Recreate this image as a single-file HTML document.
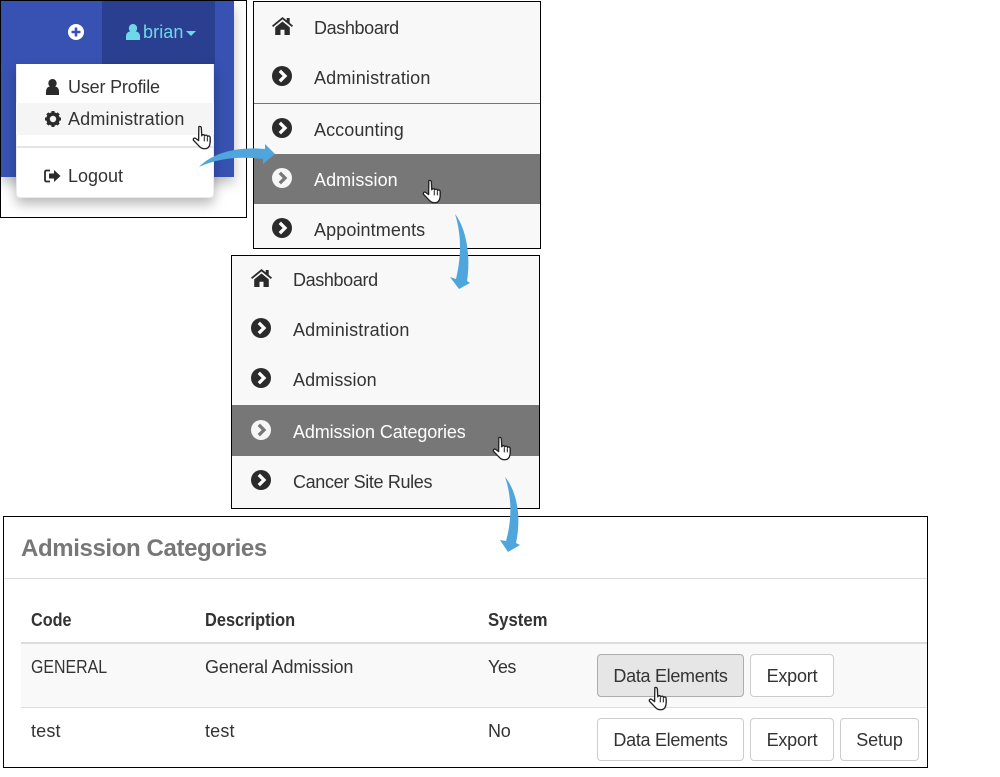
<!DOCTYPE html>
<html><head><meta charset="utf-8"><style>
html,body{margin:0;padding:0;background:#fff}
#p{position:relative;width:1000px;height:777px;overflow:hidden;background:#fff;font-family:"Liberation Sans",sans-serif;font-size:18px;color:#333}
#p div,#p span,#p svg{position:absolute;box-sizing:border-box}
.t{white-space:nowrap;line-height:24px;height:24px;letter-spacing:.18px}
.box{border:1px solid #000;background:#f8f8f8}
.btn{border:1px solid #ccc;border-radius:4px;background:#fff;text-align:center;line-height:42px;height:43px;white-space:nowrap}
.b{font-weight:bold;letter-spacing:0;transform-origin:left center}
.de{letter-spacing:-.3px}.ex{letter-spacing:-.2px}
.da{letter-spacing:-.37px}.ac{letter-spacing:.08px}.ad{letter-spacing:.08px}.ap{letter-spacing:.1px}
.h{width:21px;height:25.500px}
</style></head><body><div id="p">
<svg width="0" height="0"><defs>
<g id="hand"><path d="M6.500 1.500c1.200-.8 2.300 0 2.400 1.200l.4 7.500c.3-1.500 2.600-1.500 2.800.2.500-1.300 2.500-1.200 2.700.5.600-1 2.400-.7 2.500.9.200 3 .3 5.500-.8 8-.8 1.800-2 2.700-4.500 2.700-2.700 0-4-.8-5.300-2.600L1.500 14.500c-.8-1.200.4-2.700 1.800-2l3 2.200z" fill="#fff" stroke="#222" stroke-width="1.250" stroke-linejoin="round"/><path d="M11.700 11v4.500M14.600 11.500v4M17.200 12.500v3.500" stroke="#222" stroke-width="1" fill="none"/></g>
<g id="chev"><circle cx="10" cy="10" r="10" fill="#2b2b2b"/><path d="M7.800 4.800L13 10l-5.200 5.200" fill="none" stroke="#fff" stroke-width="3.300"/></g>
<g id="chevw"><circle cx="10" cy="10" r="10" fill="#f6f6f6"/><path d="M7.800 4.800L13 10l-5.200 5.200" fill="none" stroke="#777" stroke-width="3.300"/></g>
<g id="home"><path d="M10.500 0L0 8.600l1.100 1.400L10.500 2.400 19.900 10 21 8.600l-3.300-2.700V1h-3v2.400zM3.200 10.400v7.600h5.300v-5.300h4v5.300h5.300v-7.600L10.500 4.500z" fill="#2b2b2b"/></g>
</defs></svg>

<!-- panel 1 -->
<div style="left:0;top:0;width:247px;height:218px;border:1px solid #000;background:#fff"></div>
<div style="left:1px;top:1px;width:233px;height:176px;background:#3752b3;box-shadow:0 6px 12px rgba(0,0,0,.25)"></div>
<div style="left:102px;top:1px;width:113px;height:63px;background:#2a3f8f"></div>
<svg style="left:68px;top:24px" width="16" height="16"><circle cx="8" cy="8" r="8" fill="#fff"/><path d="M8 3.500v9M3.500 8h9" stroke="#3752b3" stroke-width="2.600"/></svg>
<svg style="left:126px;top:24px" width="14" height="16"><circle cx="7" cy="4.200" r="4.200" fill="#6fd8e8"/><path d="M0 16v-3.500C0 9.500 2 7.500 4 7.500h6c2 0 4 2 4 5V16z" fill="#6fd8e8"/></svg>
<span class="t" style="left:143px;top:20px;color:#6fd8e8;letter-spacing:.1px">brian</span>
<svg style="left:186px;top:31px" width="10" height="5"><path d="M0 0h10L5 5z" fill="#6fd8e8"/></svg>
<div style="left:16px;top:64px;width:198px;height:134px;background:#fff;border-radius:0 0 4px 4px;box-shadow:0 6px 12px rgba(0,0,0,.28);border:1px solid rgba(0,0,0,.08);border-top:0"></div>
<div style="left:16px;top:103px;width:198px;height:32px;background:#f5f5f5"></div>
<div style="left:16px;top:146px;width:198px;height:2px;background:#e5e5e5"></div>
<svg style="left:46px;top:79px" width="13" height="16"><circle cx="6.500" cy="4.200" r="4.200" fill="#2b2b2b"/><path d="M0 16v-3.500C0 9.500 2 7.500 4 7.500h5c2 0 4 2 4 5V16z" fill="#2b2b2b"/></svg>
<span class="t" style="left:68px;top:75px;letter-spacing:-.18px">User Profile</span>
<svg style="left:45px;top:111px" width="16" height="16" viewBox="0 0 16 16"><circle cx="8" cy="8" r="5" fill="none" stroke="#2b2b2b" stroke-width="3.600"/><path d="M8 0v16M0 8h16M2.300 2.300l11.400 11.400M13.700 2.300L2.300 13.700" stroke="#2b2b2b" stroke-width="3" stroke-dasharray="3 10 3"/></svg>
<span class="t" style="left:68px;top:107px">Administration</span>
<svg style="left:44px;top:169px" width="17" height="14"><path d="M6 1.500H2.500Q1 1.500 1 3v8q0 1.500 1.500 1.500H6" fill="none" stroke="#2b2b2b" stroke-width="1.800"/><path d="M5 4.500h5V1l6.500 6-6.500 6V9.500H5z" fill="#2b2b2b"/></svg>
<span class="t" style="left:68px;top:164px;letter-spacing:0">Logout</span>
<svg class="h" style="left:192px;top:125px" viewBox="0 0 20 24"><use href="#hand"/></svg>

<!-- panel 2 -->
<div class="box" style="left:253px;top:1px;width:288px;height:248px"></div>
<div style="left:254px;top:103px;width:286px;height:1px;background:#777"></div>
<div style="left:254px;top:154px;width:286px;height:50px;background:#777"></div>
<svg style="left:272px;top:17px" width="21" height="18"><use href="#home"/></svg>
<span class="t da" style="left:314px;top:16px">Dashboard</span>
<svg style="left:272px;top:66px" width="20" height="20"><use href="#chev"/></svg>
<span class="t" style="left:314px;top:66px">Administration</span>
<svg style="left:272px;top:118px" width="20" height="20"><use href="#chev"/></svg>
<span class="t ac" style="left:314px;top:118px">Accounting</span>
<svg style="left:272px;top:168px" width="20" height="20"><use href="#chevw"/></svg>
<span class="t ad" style="left:314px;top:168px;color:#fff">Admission</span>
<svg style="left:272px;top:218px" width="20" height="20"><use href="#chev"/></svg>
<span class="t ap" style="left:314px;top:218px">Appointments</span>
<svg class="h" style="left:422px;top:179px" viewBox="0 0 20 24"><use href="#hand"/></svg>

<!-- panel 3 -->
<div class="box" style="left:231px;top:255px;width:309px;height:254px"></div>
<div style="left:232px;top:405px;width:307px;height:51px;background:#777"></div>
<svg style="left:251px;top:269px" width="21" height="18"><use href="#home"/></svg>
<span class="t da" style="left:293px;top:268px">Dashboard</span>
<svg style="left:251px;top:318px" width="20" height="20"><use href="#chev"/></svg>
<span class="t" style="left:293px;top:318px">Administration</span>
<svg style="left:251px;top:368px" width="20" height="20"><use href="#chev"/></svg>
<span class="t ad" style="left:293px;top:368px">Admission</span>
<svg style="left:251px;top:420px" width="20" height="20"><use href="#chevw"/></svg>
<span class="t" style="left:293px;top:420px;color:#fff;letter-spacing:-.12px">Admission Categories</span>
<svg style="left:251px;top:470px" width="20" height="20"><use href="#chev"/></svg>
<span class="t" style="left:293px;top:470px;letter-spacing:-.35px">Cancer Site Rules</span>
<svg class="h" style="left:492px;top:436px" viewBox="0 0 20 24"><use href="#hand"/></svg>

<!-- panel 4 -->
<div style="left:3px;top:516px;width:925px;height:252px;border:1px solid #000;background:#fff"></div>
<div style="left:4px;top:578px;width:923px;height:1px;background:#ddd"></div>
<span class="t b" style="left:21px;top:535px;font-size:24px;color:#777;line-height:27px;height:27px;letter-spacing:-.38px">Admission Categories</span>
<span class="t b" style="left:31px;top:608px;transform:scaleX(.9)">Code</span>
<span class="t b" style="left:205px;top:608px;transform:scaleX(.91)">Description</span>
<span class="t b" style="left:488px;top:608px;transform:scaleX(.93)">System</span>
<div style="left:21px;top:644px;width:906px;height:63px;background:#f9f9f9"></div>
<div style="left:21px;top:642px;width:906px;height:2px;background:#ddd"></div>
<div style="left:21px;top:707px;width:906px;height:1px;background:#ddd"></div>
<span class="t" style="left:31px;top:655px;letter-spacing:0;transform:scaleX(.885);transform-origin:left center">GENERAL</span>
<span class="t" style="left:205px;top:655px;letter-spacing:-.17px">General Admission</span>
<span class="t" style="left:488px;top:655px;letter-spacing:-.5px">Yes</span>
<span class="t" style="left:31px;top:719px">test</span>
<span class="t" style="left:205px;top:719px">test</span>
<span class="t" style="left:488px;top:719px;letter-spacing:-.2px">No</span>
<div class="btn de" style="left:597px;top:654px;width:147px;background:#e6e6e6;border-color:#adadad">Data Elements</div>
<div class="btn ex" style="left:750px;top:654px;width:84px">Export</div>
<div class="btn de" style="left:597px;top:718px;width:147px">Data Elements</div>
<div class="btn ex" style="left:750px;top:718px;width:84px">Export</div>
<div class="btn" style="left:840px;top:718px;width:79px;letter-spacing:-.1px">Setup</div>
<svg class="h" style="left:648px;top:686px" viewBox="0 0 20 24"><use href="#hand"/></svg>

<!-- arrows -->
<svg style="left:0;top:0" width="1000" height="777" viewBox="0 0 1000 777">
<path d="M199 167C212 153 238 146 265 149V144L275 154 263 164V159C240 156 218 158 199 167Z" fill="#4fa6dc"/>
<path d="M455 214C466 228 471 255 467 281L470 283 459 289 450 277 456 279C461 258 462 236 455 214Z" fill="#4fa6dc"/>
<path d="M505 477C516 490 522 515 516 543L520 545 508 552 500 540 506 541C512 520 512 497 505 477Z" fill="#4fa6dc"/>
</svg>
</div></body></html>
